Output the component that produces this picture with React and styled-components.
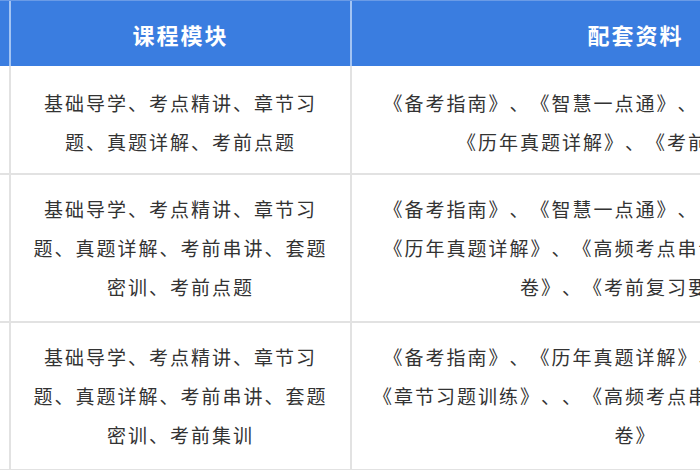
import styled, { createGlobalStyle } from "styled-components";

const GlobalStyle = createGlobalStyle`
  html, body {
    margin: 0;
    padding: 0;
    overflow: hidden;
    background: #fff;
  }
  body {
    font-family: "Noto Sans CJK SC", "Noto Sans", sans-serif;
    text-spacing-trim: space-all;
  }
`;

const rows = [
  {
    module: ["基础导学、考点精讲、章节习", "题、真题详解、考前点题"],
    material: [
      "《备考指南》、《智慧一点通》、《章节习题训练》、",
      "《历年真题详解》、《考前点题密卷》",
    ],
  },
  {
    module: ["基础导学、考点精讲、章节习", "题、真题详解、考前串讲、套题", "密训、考前点题"],
    material: [
      "《备考指南》、《智慧一点通》、《章节习题训练》、",
      "《历年真题详解》、《高频考点串讲与全真模拟密训试",
      "卷》、《考前复习要点》",
    ],
  },
  {
    module: ["基础导学、考点精讲、章节习", "题、真题详解、考前串讲、套题", "密训、考前集训"],
    material: [
      "《备考指南》、《历年真题详解》、《智慧一点通》、",
      "《章节习题训练》、、《高频考点串讲与全真模拟密训试",
      "卷》",
    ],
  },
];

const Table = styled.div`
  width: 921px;
  border-top: 1px solid #6a9be6;
`;

const Row = styled.div`
  display: grid;
  grid-template-columns: 11px 341px 569px;
`;

const HeadCell = styled.div`
  box-sizing: border-box;
  height: 65px;
  display: flex;
  align-items: center;
  justify-content: center;
  background: #3a7de0;
  color: #fff;
  font-size: 22px;
  font-weight: bold;
  letter-spacing: 2px;
  border-right: 2px solid ${(p) => (p.$last ? "#3a7de0" : "#a3c4f3")};
`;

const Cell = styled.div`
  box-sizing: border-box;
  padding: ${(p) => p.$pad};
  display: flex;
  flex-direction: column;
  align-items: center;
  justify-content: center;
  border-right: 2px solid #e2e2e2;
  border-bottom: 2px solid #e2e2e2;
  color: #333;
  font-size: 19px;
  line-height: 39px;
  letter-spacing: 2px;
  text-spacing-trim: space-all;
`;

const Line = styled.span`
  display: block;
  white-space: nowrap;
`;

export default function App() {
  return (
    <>
      <GlobalStyle />
      <Table>
        <Row>
          <HeadCell />
          <HeadCell>课程模块</HeadCell>
          <HeadCell $last>配套资料</HeadCell>
        </Row>
        {rows.map((row, i) => {
          const pad = row.module.length === 2 ? "17px 0 12px" : "14px 0 15px";
          return (
            <Row key={i}>
              <Cell $pad={pad} />
              <Cell $pad={pad}>
                {row.module.map((l, j) => (
                  <Line key={j}>{l}</Line>
                ))}
              </Cell>
              <Cell $pad={pad}>
                {row.material.map((l, j) => (
                  <Line key={j}>{l}</Line>
                ))}
              </Cell>
            </Row>
          );
        })}
      </Table>
    </>
  );
}
